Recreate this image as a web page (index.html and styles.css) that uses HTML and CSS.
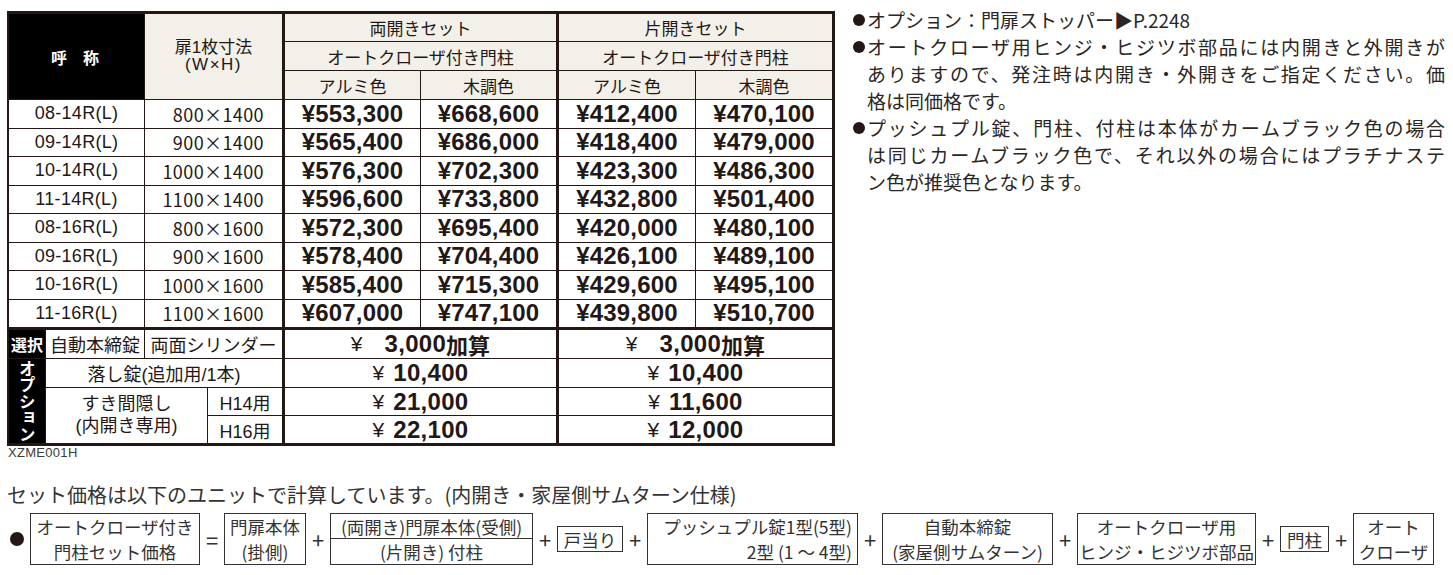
FILE: index.html
```html
<!DOCTYPE html>
<html lang="ja">
<head>
<meta charset="utf-8">
<title>オートクローザ付き門柱セット価格</title>
<link rel="stylesheet" href="styles.css">
</head>
<body>
<div class="top">
  <div class="tbl">
    <div class="thead">
      <div class="h-name">呼　称</div>
      <div class="h-size tk"><span>扉1枚寸法</span><span class="wh">(W×H)</span></div>
      <div class="h-set tk">両開きセット</div>
      <div class="h-set">片開きセット</div>
      <div class="h-set tk">オートクローザ付き門柱</div>
      <div class="h-set">オートクローザ付き門柱</div>
      <div>アルミ色</div>
      <div class="tk">木調色</div>
      <div>アルミ色</div>
      <div>木調色</div>
    </div>
    <div class="tbody">
      <div>08-14R(L)</div><div>800×1400</div><div>¥553,300</div><div>¥668,600</div><div>¥412,400</div><div>¥470,100</div>
      <div>09-14R(L)</div><div>900×1400</div><div>¥565,400</div><div>¥686,000</div><div>¥418,400</div><div>¥479,000</div>
      <div>10-14R(L)</div><div>1000×1400</div><div>¥576,300</div><div>¥702,300</div><div>¥423,300</div><div>¥486,300</div>
      <div>11-14R(L)</div><div>1100×1400</div><div>¥596,600</div><div>¥733,800</div><div>¥432,800</div><div>¥501,400</div>
      <div>08-16R(L)</div><div>800×1600</div><div>¥572,300</div><div>¥695,400</div><div>¥420,000</div><div>¥480,100</div>
      <div>09-16R(L)</div><div>900×1600</div><div>¥578,400</div><div>¥704,400</div><div>¥426,100</div><div>¥489,100</div>
      <div>10-16R(L)</div><div>1000×1600</div><div>¥585,400</div><div>¥715,300</div><div>¥429,600</div><div>¥495,100</div>
      <div>11-16R(L)</div><div>1100×1600</div><div>¥607,000</div><div>¥747,100</div><div>¥439,800</div><div>¥510,700</div>
    </div>
    <div class="topt">
      <div class="blk">選択</div>
      <div class="lbl">自動本締錠</div>
      <div class="lbl span2 tk">両面シリンダー</div>
      <div class="oprice tk"><span class="yen wide">¥</span><b>3,000</b><b class="jp">加算</b></div>
      <div class="oprice"><span class="yen wide">¥</span><b>3,000</b><b class="jp">加算</b></div>

      <div class="blk vert">オプション</div>
      <div class="lbl span3 tk">落し錠(追加用/1本)</div>
      <div class="oprice tk"><span class="yen">¥</span><b>10,400</b></div>
      <div class="oprice"><span class="yen">¥</span><b>10,400</b></div>

      <div class="lbl gapcell"><span>すき間隠し</span><span>(内開き専用)</span></div>
      <div class="lbl tk">H14用</div>
      <div class="oprice tk"><span class="yen">¥</span><b>21,000</b></div>
      <div class="oprice"><span class="yen">¥</span><b>11,600</b></div>

      <div class="lbl tk">H16用</div>
      <div class="oprice tk"><span class="yen">¥</span><b>22,100</b></div>
      <div class="oprice"><span class="yen">¥</span><b>12,000</b></div>
    </div>
  </div>

  <div class="notes">
    <div class="note"><span class="bul"></span><div class="txt"><span class="ln">オプション：門扉ストッパー▶P.2248</span></div></div>
    <div class="note"><span class="bul"></span><div class="txt">
      <span class="ln j">オートクローザ用ヒンジ・ヒジツボ部品には内開きと外開きが</span>
      <span class="ln j">ありますので、発注時は内開き・外開きをご指定ください。価</span>
      <span class="ln">格は同価格です。</span>
    </div></div>
    <div class="note"><span class="bul"></span><div class="txt">
      <span class="ln j">プッシュプル錠、門柱、付柱は本体がカームブラック色の場合</span>
      <span class="ln j">は同じカームブラック色で、それ以外の場合にはプラチナステ</span>
      <span class="ln">ン色が推奨色となります。</span>
    </div></div>
  </div>
</div>

<div class="code">XZME001H</div>
<div class="calc-title">セット価格は以下のユニットで計算しています。(内開き・家屋側サムターン仕様)</div>

<div class="formula">
  <span class="dot"></span>
  <div class="box w1"><span>オートクローザ付き</span><span>門柱セット価格</span></div>
  <span class="op">=</span>
  <div class="box w2"><span>門扉本体</span><span>(掛側)</span></div>
  <span class="op">+</span>
  <div class="box split w3"><span class="half first">(両開き)門扉本体(受側)</span><span class="half">(片開き) 付柱</span></div>
  <span class="op">+</span>
  <div class="box small w4"><span>戸当り</span></div>
  <span class="op">+</span>
  <div class="box right w5"><span>プッシュプル錠1型(5型)</span><span>2型 (1 ～ 4型)</span></div>
  <span class="op">+</span>
  <div class="box w6"><span>自動本締錠</span><span>(家屋側サムターン)</span></div>
  <span class="op">+</span>
  <div class="box w7"><span>オートクローザ用</span><span>ヒンジ・ヒジツボ部品</span></div>
  <span class="op">+</span>
  <div class="box small w8"><span>門柱</span></div>
  <span class="op">+</span>
  <div class="box w9"><span>オート</span><span>クローザ</span></div>
</div>
</body>
</html>
```

FILE: styles.css
```css
* { box-sizing: border-box; }

body {
  margin: 0;
  padding: 6px 0 0 7px;
  background: #fff;
  color: #231815;
  font-family: "Liberation Sans", "Noto Sans CJK JP", sans-serif;
}

.top {
  display: flex;
  align-items: flex-start;
}

/* ---------- price table ---------- */
.tbl {
  margin-top: 5px;
  width: 828px;
  display: flex;
  flex-direction: column;
  gap: 1px;
  background: #231815;
  padding: 3px 3px 3px 2px;
}

.thead,
.tbody {
  display: grid;
  grid-template-columns: 135px 139px 135px 137px 136px 136px;
  gap: 1px;
}

.thead {
  grid-template-rows: 27px 28px 28px;
}

.thead > div {
  background: #f3f0e9;
  display: flex;
  align-items: center;
  justify-content: center;
  font-size: 17px;
  white-space: nowrap;
}

.thead > .h-name {
  grid-row: span 3;
  background: #000;
  color: #fff;
  font-weight: 700;
  font-size: 16px;
  padding-right: 3px;
}

.thead > .h-size {
  grid-row: span 3;
  flex-direction: column;
  font-size: 17px;
  line-height: 17px;
  padding-bottom: 2px;
}

.wh { letter-spacing: 1.5px; }

.h-set { grid-column: span 2; }

.tk { margin-right: 2px; }

.tbody {
  grid-auto-rows: 27.5px;
  margin-bottom: 2px;
}

.tbody > div {
  background: #fff;
  display: flex;
  align-items: center;
  justify-content: center;
  white-space: nowrap;
  font-family: "Liberation Sans", sans-serif;
  font-weight: 700;
  font-size: 24px;
  letter-spacing: 0.2px;
}

.tbody > div:nth-child(6n+1) {
  font-weight: 400;
  font-size: 18px;
  letter-spacing: 0.3px;
}

.tbody > div:nth-child(6n+2) {
  font-family: "Noto Sans CJK JP", sans-serif;
  font-weight: 400;
  font-size: 18px;
  letter-spacing: 0.4px;
  justify-content: flex-end;
  padding-right: 18px;
}

.tbody > div:nth-child(6n+2),
.tbody > div:nth-child(6n+4) {
  margin-right: 2px;
}

.topt {
  display: grid;
  grid-template-columns: 36px 98px 62px 76px 273px 273px;
  grid-template-rows: 28px 28px 27px 27px;
  gap: 1px;
}

.topt > div {
  background: #fff;
  display: flex;
  align-items: center;
  justify-content: center;
  white-space: nowrap;
}

.topt > .blk {
  background: #000;
  color: #fff;
  font-family: "Noto Sans CJK JP", sans-serif;
  font-weight: 700;
  font-size: 16px;
}

.topt > .vert {
  grid-row: span 3;
  writing-mode: vertical-rl;
  text-orientation: upright;
  font-size: 16.5px;
  line-height: 1;
  letter-spacing: 0;
}

.lbl {
  font-size: 18px;
}

.span2 { grid-column: span 2; }
.span3 { grid-column: span 3; }

.topt > .gapcell {
  grid-column: span 2;
  grid-row: span 2;
  flex-direction: column;
  line-height: 22px;
  padding-bottom: 2px;
}

.oprice {
  font-size: 24px;
}

.oprice b {
  font-weight: 700;
  letter-spacing: 0.3px;
}

.oprice .jp {
  font-family: "Noto Sans CJK JP", sans-serif;
  font-size: 22px;
  letter-spacing: 0;
}

.yen {
  font-weight: 400;
  font-size: 21px;
  margin-right: 9px;
}

.yen.wide { margin-right: 22px; }

/* ---------- notes ---------- */
.notes {
  margin-left: 13px;
  font-family: "Noto Sans CJK JP", sans-serif;
  font-size: 19px;
  line-height: 27px;
  color: #2b2624;
}

.note {
  display: flex;
  align-items: flex-start;
}

.bul {
  flex: none;
  width: 12px;
  height: 12px;
  border-radius: 50%;
  background: #231815;
  margin: 8px 2px 0 5px;
}

.txt {
  width: 578px;
}

.ln {
  display: block;
  white-space: nowrap;
}

.ln.j {
  text-align: justify;
  text-align-last: justify;
  white-space: normal;
}

/* ---------- formula ---------- */
.code {
  font-family: "Liberation Sans", sans-serif;
  font-size: 13px;
  line-height: 14px;
  letter-spacing: 0.3px;
  color: #3a3a3a;
  margin-left: 1px;
}

.calc-title {
  margin-top: 22px;
  font-family: "Noto Sans CJK JP", sans-serif;
  font-size: 20px;
  line-height: 26px;
  color: #333;
  white-space: nowrap;
}

.formula {
  margin-top: 5px;
  display: flex;
  align-items: center;
  font-family: "Noto Sans CJK JP", sans-serif;
  font-size: 17.5px;
  color: #333;
}

.dot {
  flex: none;
  width: 14px;
  height: 14px;
  border-radius: 50%;
  background: #231815;
  margin: 0 6px 0 3px;
}

.op {
  flex: none;
  width: 24px;
  text-align: center;
  font-size: 22px;
  line-height: 26px;
}

.box {
  flex: none;
  height: 52px;
  border: 1px solid #333;
  display: flex;
  flex-direction: column;
  justify-content: center;
  align-items: center;
  line-height: 25px;
  white-space: nowrap;
}

.box.small { height: 26px; }

.box.right {
  align-items: flex-end;
  padding-right: 5px;
}

.box.split {
  justify-content: flex-start;
  align-items: stretch;
}

.half {
  height: 25px;
  text-align: center;
}

.half.first {
  border-bottom: 1px solid #333;
}

.w1 { width: 170px; }
.w2 { width: 82px; }
.w3 { width: 203px; }
.w4 { width: 66px; }
.w5 { width: 211px; }
.w6 { width: 171px; }
.w7 { width: 179px; }
.w8 { width: 49px; }
.w9 { width: 81px; }
```
